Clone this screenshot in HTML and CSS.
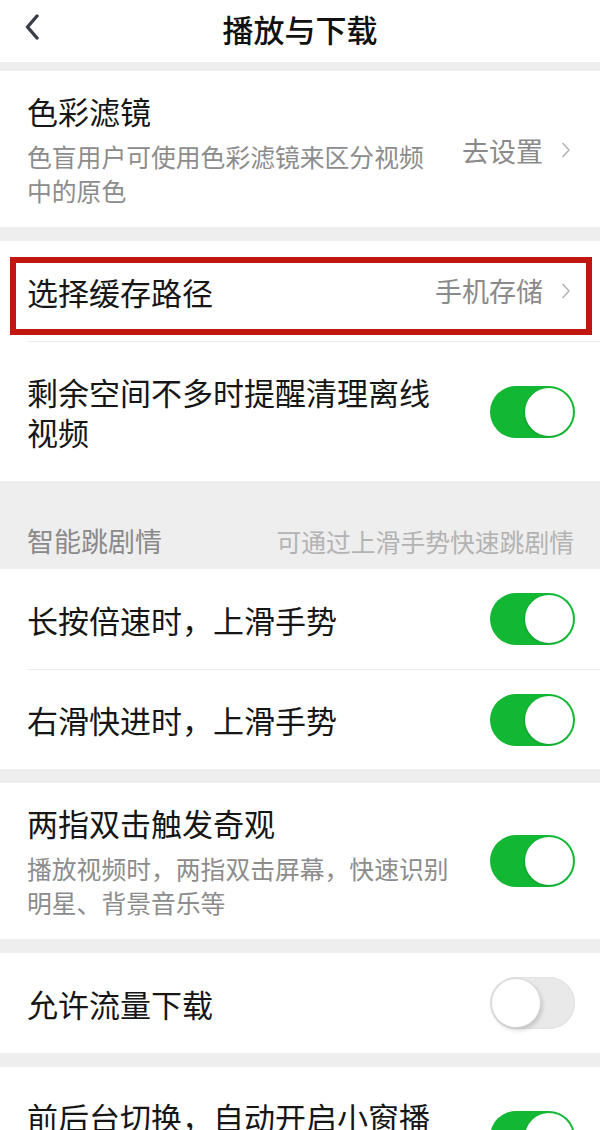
FILE: index.html
```html
<!DOCTYPE html>
<html lang="zh-CN">
<head>
<meta charset="utf-8">
<title>播放与下载</title>
<link rel="stylesheet" href="styles.css">
</head>
<body>
<header class="nav">
  <a class="back" aria-label="返回">
    <svg width="14" height="26" viewBox="0 0 14 26"><polyline points="12,2 2.5,13 12,24" fill="none" stroke="#3a3c47" stroke-width="3.4" stroke-linecap="round" stroke-linejoin="round"/></svg>
  </a>
  <h1 class="nav-title">播放与下载</h1>
  <span class="nav-spacer"></span>
</header>

<main class="page">
  <section class="group">
    <div class="row row-desc">
      <div class="row-body">
        <div class="row-text">
          <div class="row-title">色彩滤镜</div>
          <div class="row-sub">色盲用户可使用色彩滤镜来区分视频中的原色</div>
        </div>
        <div class="row-value">去设置</div>
        <svg class="chev" width="14" height="16" viewBox="0 0 14 16"><polyline points="2,1.5 8,8 2,14.5" fill="none" stroke="#b4b4b4" stroke-width="1.6" stroke-linecap="round" stroke-linejoin="round"/></svg>
      </div>
    </div>
  </section>

  <section class="group">
    <div class="row row-marked">
      <div class="row-body">
        <div class="row-text">
          <div class="row-title">选择缓存路径</div>
        </div>
        <div class="row-value">手机存储</div>
        <svg class="chev" width="14" height="16" viewBox="0 0 14 16"><polyline points="2,1.5 8,8 2,14.5" fill="none" stroke="#b4b4b4" stroke-width="1.6" stroke-linecap="round" stroke-linejoin="round"/></svg>
      </div>
      <span class="annot"></span>
    </div>
    <div class="row">
      <div class="row-body">
        <div class="row-text">
          <div class="row-title">剩余空间不多时提醒清理离线视频</div>
        </div>
        <span class="switch on"></span>
      </div>
    </div>
  </section>

  <div class="group-header">
    <span class="gh-title">智能跳剧情</span>
    <span class="gh-hint">可通过上滑手势快速跳剧情</span>
  </div>

  <section class="group">
    <div class="row">
      <div class="row-body">
        <div class="row-text">
          <div class="row-title">长按倍速时，上滑手势</div>
        </div>
        <span class="switch on"></span>
      </div>
    </div>
    <div class="row">
      <div class="row-body">
        <div class="row-text">
          <div class="row-title">右滑快进时，上滑手势</div>
        </div>
        <span class="switch on"></span>
      </div>
    </div>
  </section>

  <section class="group">
    <div class="row row-desc">
      <div class="row-body">
        <div class="row-text">
          <div class="row-title">两指双击触发奇观</div>
          <div class="row-sub">播放视频时，两指双击屏幕，快速识别明星、背景音乐等</div>
        </div>
        <span class="switch on"></span>
      </div>
    </div>
  </section>

  <section class="group">
    <div class="row">
      <div class="row-body">
        <div class="row-text">
          <div class="row-title">允许流量下载</div>
        </div>
        <span class="switch"></span>
      </div>
    </div>
  </section>

  <section class="group">
    <div class="row">
      <div class="row-body">
        <div class="row-text">
          <div class="row-title">前后台切换，自动开启小窗播放</div>
        </div>
        <span class="switch on"></span>
      </div>
    </div>
  </section>
</main>
</body>
</html>
```

FILE: styles.css
```css
* { box-sizing: border-box; }

html, body {
  margin: 0;
  padding: 0;
}

body {
  background: #eeeeee;
  font-family: "Noto Sans CJK SC", "Noto Sans", sans-serif;
  color: #161616;
  -webkit-font-smoothing: antialiased;
}

/* ---------- nav ---------- */
.nav {
  height: 62px;
  background: #ffffff;
  display: grid;
  grid-template-columns: 1fr auto 1fr;
  align-items: center;
  padding: 0 25px 4px 25px;
}

.back {
  display: flex;
  align-items: center;
  margin-bottom: 4px;
}

.nav-title {
  margin: 0;
  font-size: 31px;
  line-height: 40px;
  font-weight: 500;
  color: #111111;
}

/* ---------- groups ---------- */
.page {
  padding-top: 9px;
}

.group {
  background: #ffffff;
}

.group + .group {
  margin-top: 14px;
}

.group-header {
  display: flex;
  justify-content: space-between;
  align-items: center;
  padding: 42px 26px 10px 27px;
  line-height: 36px;
}

.gh-title {
  font-size: 27px;
  color: #8a8a8a;
}

.gh-hint {
  font-size: 24.8px;
  color: #b3b3b3;
}

/* ---------- rows ---------- */
.row {
  padding-left: 27px;
}

.row-body {
  display: flex;
  align-items: center;
  min-height: 100px;
  padding-right: 25px;
}

.row + .row .row-body {
  border-top: 1px solid #ededed;
}

.row-text {
  flex: 1;
  min-width: 0;
  margin-right: 31px;
  padding: 30px 0 29px;
}

.row-desc .row-text {
  padding: 20px 0 20px;
}

.row-title {
  font-size: 31px;
  line-height: 40px;
  color: #161616;
}

.row-sub {
  margin-top: 8px;
  font-size: 24.8px;
  line-height: 34px;
  color: #8c8c8c;
}

.row-value {
  flex: none;
  font-size: 27px;
  line-height: 40px;
  color: #8a8a8a;
}

.row-desc .row-value {
  margin-top: 4px;
}

.chev {
  flex: none;
  margin-left: 18px;
}

.row-desc .chev {
  margin-top: 2px;
}

/* red annotation frame drawn over the row */
.row-marked {
  position: relative;
}

.annot {
  position: absolute;
  top: 16px;
  left: 10px;
  right: 8px;
  bottom: 6px;
  border: 6px solid #c0180f;
  pointer-events: none;
}

/* ---------- switches ---------- */
.switch {
  flex: none;
  position: relative;
  width: 85px;
  height: 52px;
  border-radius: 26px;
  background: #e9e9e9;
  box-shadow: inset 0 0 0 1px #e2e2e2;
}

.switch::after {
  content: "";
  position: absolute;
  top: 2px;
  left: 2px;
  width: 48px;
  height: 48px;
  border-radius: 50%;
  background: #ffffff;
  box-shadow: 0 0 0 1px #d6d6d6, 2px 3px 5px rgba(0, 0, 0, 0.18);
}

.switch.on {
  background: #12b833;
  box-shadow: none;
}

.switch.on::after {
  left: auto;
  right: 2px;
  box-shadow: -1px 1px 2px rgba(0, 0, 0, 0.12);
}
```
